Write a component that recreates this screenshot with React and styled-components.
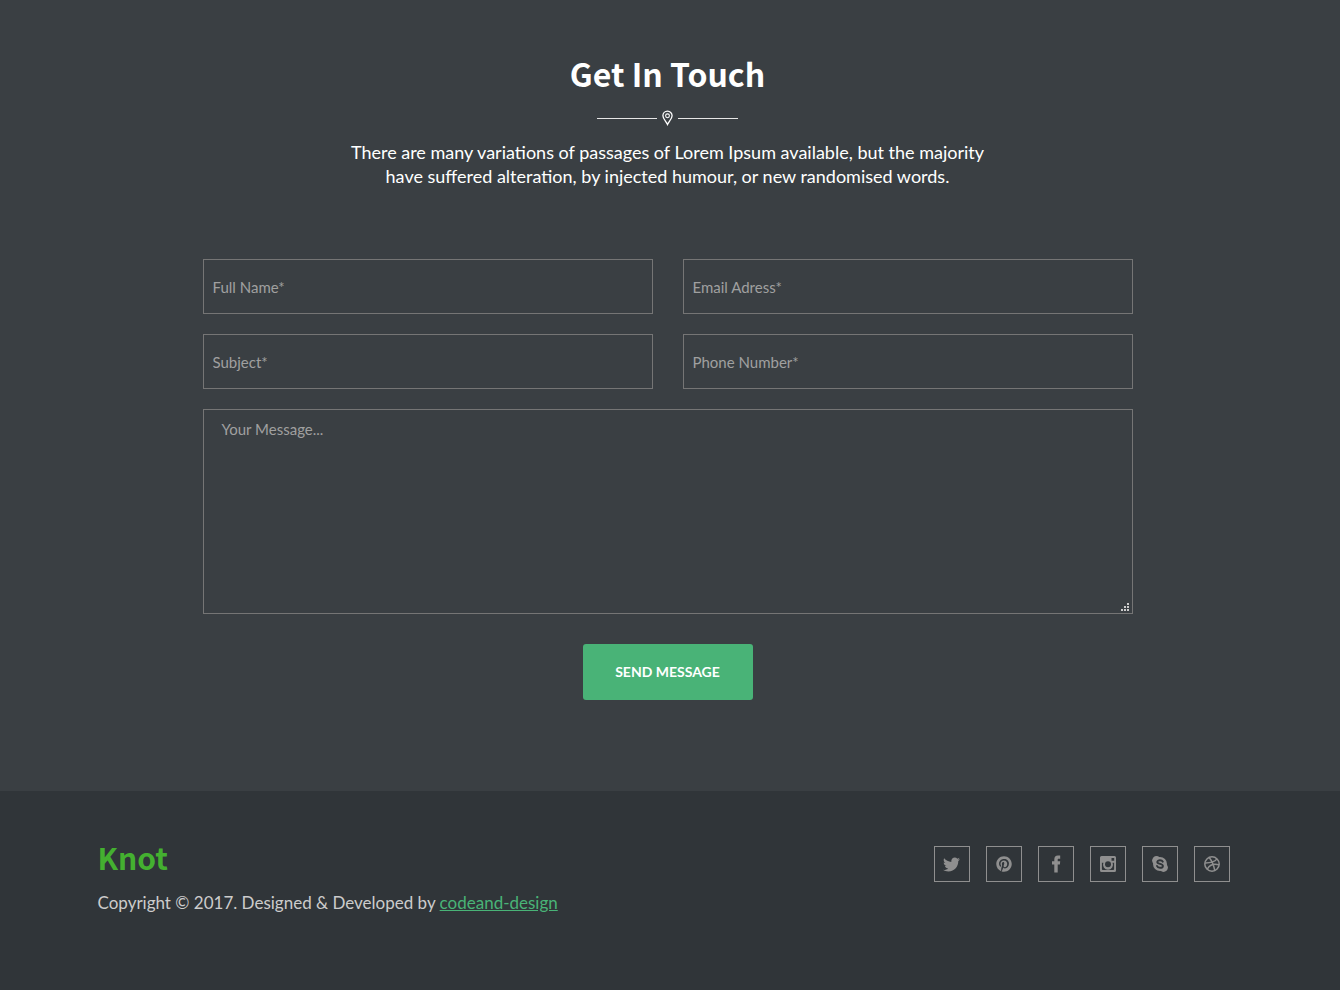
import React from "react";
import styled, { createGlobalStyle } from "styled-components";
import { FaTwitter, FaPinterest } from "react-icons/fa";

const GlobalStyle = createGlobalStyle`
  * { box-sizing: border-box; }
  body {
    margin: 0;
    background: #303539;
    color: #fff;
    font-family: Lato, "Open Sans", sans-serif;
  }
`;

const titleFont = `"Noto Sans CJK SC", "Noto Sans", sans-serif`;

const Contact = styled.section`
  background: #3a3f43;
  padding: 49px 20px 91px 15px;
`;

const Title = styled.h2`
  margin: 0;
  font: 700 32px/48px ${titleFont};
  text-align: center;
`;

const Divider = styled.div`
  display: flex;
  justify-content: center;
  align-items: center;
  gap: 5px;
  height: 16px;
  margin: 13px 0 14px;
`;

const Rule = styled.span`
  width: 60px;
  height: 1px;
  background: #e6e6e6;
`;

const Intro = styled.p`
  max-width: 660px;
  margin: 0 auto 71px;
  font-size: 18px;
  line-height: 24px;
  text-align: center;
`;

const Form = styled.form`
  display: grid;
  grid-template-columns: 1fr 1fr;
  gap: 20px 30px;
  max-width: 930px;
  margin: 0 auto;
`;

const Input = styled.input`
  width: 100%;
  min-width: 0;
  height: 55px;
  padding: 0 9px;
  border: 1px solid #757575;
  border-radius: 0;
  background: transparent;
  color: #fff;
  font: 15px/20px Lato, sans-serif;
  &::placeholder { color: #a0a0a0; opacity: 1; }
`;

const dot = (x, y) => `linear-gradient(#ccc, #ccc) right ${x}px bottom ${y}px / 2px 2px no-repeat`;

const Message = styled.textarea`
  display: block;
  grid-column: 1 / -1;
  width: 100%;
  height: 205px;
  padding: 9px 18px;
  border: 1px solid #757575;
  border-radius: 0;
  background: transparent;
  color: #fff;
  font: 15px/20px Lato, sans-serif;
  resize: both;
  &::placeholder { color: #a0a0a0; opacity: 1; }
  &::-webkit-resizer {
    background: ${[dot(3, 8), dot(3, 5), dot(6, 5), dot(3, 2), dot(6, 2), dot(9, 2)].join(", ")};
  }
`;

const Send = styled.button`
  grid-column: 1 / -1;
  justify-self: center;
  width: 170px;
  height: 56px;
  margin-top: 10px;
  padding: 0;
  border: 0;
  border-radius: 3px;
  background: #49b377;
  color: #fff;
  font: 700 14px/20px Lato, sans-serif;
  text-transform: uppercase;
  cursor: pointer;
`;

const Footer = styled.footer`
  padding: 44px 20px 70px 15px;
`;

const FooterInner = styled.div`
  display: flex;
  justify-content: space-between;
  align-items: flex-start;
  flex-wrap: wrap;
  gap: 20px;
  max-width: 1140px;
  margin: 0 auto;
`;

const Brand = styled.h2`
  margin: 0 0 12px;
  color: #44b030;
  font: 700 30px/44px ${titleFont};
`;

const Copyright = styled.p`
  margin: 0;
  color: #ccc;
  font-size: 17px;
  line-height: 24px;
`;

const Credit = styled.a`
  color: #49b377;
  text-decoration: underline;
`;

const Socials = styled.ul`
  display: flex;
  gap: 16px;
  margin: 11px 8px 0 0;
  padding: 0;
  list-style: none;
`;

const SocialLink = styled.a`
  display: flex;
  align-items: center;
  justify-content: center;
  width: 36px;
  height: 36px;
  border: 1px solid #8f8f8f;
  color: #8f8f8f;
`;

const PinIcon = () => (
  <svg width="11" height="16" viewBox="0 0 11 16" fill="none" stroke="#fff" strokeWidth="1.3" aria-hidden="true">
    <path d="M5.5 14.4C4.3 11.5 0.9 8.8 0.9 5.8a4.6 4.6 0 0 1 9.2 0C10.1 8.8 6.7 11.5 5.5 14.4Z" />
    <circle cx="5.5" cy="5.8" r="1.9" strokeWidth="1.1" />
  </svg>
);

const FacebookIcon = () => (
  <svg width="16" height="18" viewBox="0 0 16 18" fill="currentColor" aria-hidden="true">
    <path d="M12.2 0.6V3.7H10.6C9.9 3.7 9.7 4 9.7 4.7V6.3H12.2L11.9 9.4H9.7V17.4H6.3V9.4H4V6.3H6.3V4.4C6.3 1.9 7.6 0.6 9.9 0.6Z" />
  </svg>
);

const InstagramIcon = () => (
  <svg width="16" height="16" viewBox="0 0 16 16" aria-hidden="true">
    <path
      fill="currentColor"
      fillRule="evenodd"
      d="M1.5 0h13A1.5 1.5 0 0 1 16 1.5v13a1.5 1.5 0 0 1-1.5 1.5h-13A1.5 1.5 0 0 1 0 14.5v-13A1.5 1.5 0 0 1 1.5 0ZM11.5 2v2.7h2.7V2ZM1.9 6.7V13.1a1 1 0 0 0 1 1h10.2a1 1 0 0 0 1-1V6.7H12.6a5 5 0 1 1-9.2 0Z"
    />
    <circle cx="8" cy="8.3" r="3" fill="#303539" />
  </svg>
);

const SkypeIcon = () => (
  <svg width="16" height="16" viewBox="0 0 16 16" aria-hidden="true">
    <g fill="currentColor">
      <circle cx="8" cy="8" r="7" />
      <circle cx="4.5" cy="4.5" r="4.4" />
      <circle cx="11.5" cy="11.5" r="4.4" />
    </g>
    <path
      d="M10.8 5.7C10.3 4.6 9.3 4.2 8 4.2C6.400 4.200 5.300 4.900 5.300 6C5.300 8.500 10.900 7.300 10.900 9.900C10.900 11.100 9.700 11.800 8 11.800C6.500 11.800 5.400 11.200 5 10"
      fill="none"
      stroke="#303539"
      strokeWidth="1.9"
      strokeLinecap="round"
    />
  </svg>
);

const DribbbleIcon = () => (
  <svg width="16" height="16" viewBox="0 0 16 16" fill="none" stroke="currentColor" strokeWidth="1.5" aria-hidden="true">
    <circle cx="8" cy="8" r="7.2" />
    <path d="M5.2 1.5C8 5 9.7 9 10.8 14.5M0.9 7C6 7.1 10.5 6 13 2.9M3.2 13.3C5.5 9 10 7.5 15.1 8.9" />
  </svg>
);

const socials = [
  ["Twitter", FaTwitter, 17],
  ["Pinterest", FaPinterest, 16],
  ["Facebook", FacebookIcon],
  ["Instagram", InstagramIcon],
  ["Skype", SkypeIcon],
  ["Dribbble", DribbbleIcon],
];

export default function App() {
  return (
    <>
      <GlobalStyle />
      <Contact>
        <Title>Get In Touch</Title>
        <Divider>
          <Rule />
          <PinIcon />
          <Rule />
        </Divider>
        <Intro>
          There are many variations of passages of Lorem Ipsum available, but the majority have
          suffered alteration, by injected humour, or new randomised words.
        </Intro>
        <Form onSubmit={(e) => e.preventDefault()}>
          <Input type="text" placeholder="Full Name*" aria-label="Full Name" />
          <Input type="email" placeholder="Email Adress*" aria-label="Email Adress" />
          <Input type="text" placeholder="Subject*" aria-label="Subject" />
          <Input type="tel" placeholder="Phone Number*" aria-label="Phone Number" />
          <Message placeholder="Your Message..." aria-label="Your Message" />
          <Send type="submit">Send Message</Send>
        </Form>
      </Contact>
      <Footer>
        <FooterInner>
          <div>
            <Brand>Knot</Brand>
            <Copyright>
              Copyright © 2017. Designed &amp; Developed by <Credit href="#">codeand-design</Credit>
            </Copyright>
          </div>
          <Socials>
            {socials.map(([name, Icon, size]) => (
              <li key={name}>
                <SocialLink href="#" aria-label={name}>
                  <Icon size={size} />
                </SocialLink>
              </li>
            ))}
          </Socials>
        </FooterInner>
      </Footer>
    </>
  );
}
